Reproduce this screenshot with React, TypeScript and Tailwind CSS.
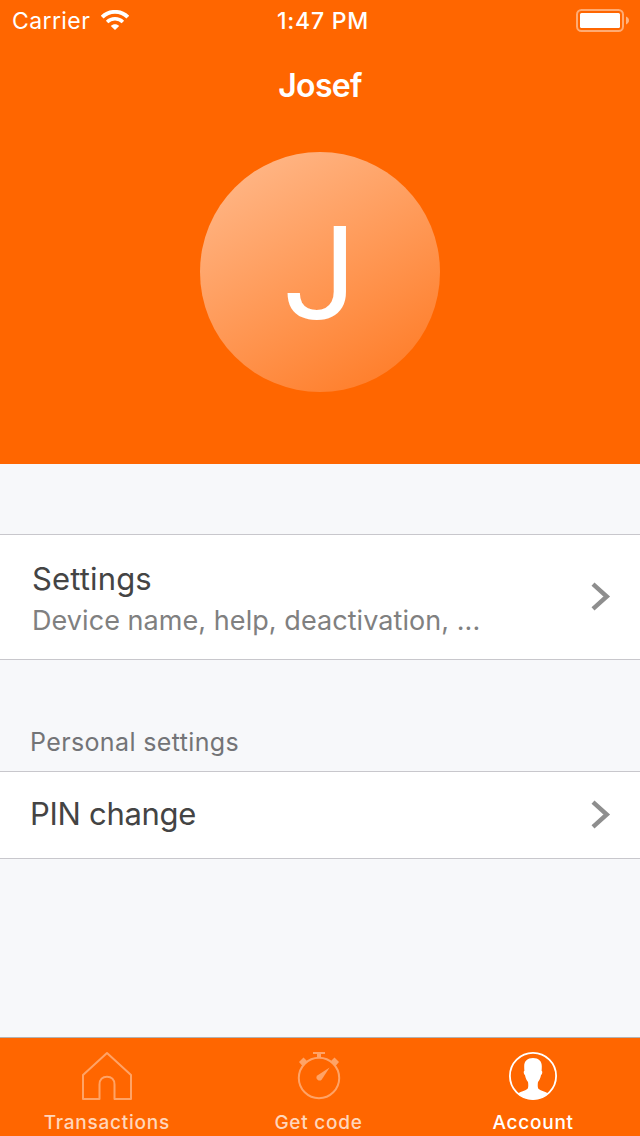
import type { ReactNode } from 'react'

interface RowProps {
  title: string
  subtitle?: string
}

interface TabProps {
  label: string
  active?: boolean
  children: ReactNode
}

function WifiIcon() {
  return (
    <svg className="mb-[2px]" width="28" height="20" viewBox="0 0 28 20" fill="none">
      <path d="M1.2 7.1C8.2 .1 19.8 .1 26.8 7.1" stroke="#fff" strokeWidth="3.9" />
      <path d="M6.1 11.9C10.4 7.8 17.6 7.8 21.9 11.9" stroke="#fff" strokeWidth="3.5" />
      <path d="M14 20L9.8 15.9C12.1 13.7 15.9 13.7 18.2 15.9Z" fill="#fff" />
    </svg>
  )
}

function BatteryIcon() {
  return (
    <svg width="54" height="24" viewBox="0 0 54 24" fill="none">
      <rect x="1" y="1" width="46" height="21" rx="4.5" stroke="#fff" strokeOpacity=".45" strokeWidth="2" />
      <rect x="4" y="4" width="40" height="15" rx="1.5" fill="#fff" />
      <path d="M50 7.5C51.8 8.3 53 9.7 53 11.5S51.8 14.7 50 15.5Z" fill="#fff" fillOpacity=".5" />
    </svg>
  )
}

function Chevron() {
  return (
    <svg className="shrink-0" width="20" height="30" viewBox="0 0 20 30" fill="none">
      <path d="M2 2.1L15.8 14.5L2 26.9" stroke="#8e8e8e" strokeWidth="4.4" />
    </svg>
  )
}

function HomeIcon() {
  return (
    <svg className="shrink-0" width="52" height="50" viewBox="0 0 52 50" fill="none">
      <path
        d="M2 24L26 2L50 24V48H33.5V33.5C33.5 28.5 30.5 25.7 26 25.7S18.5 28.5 18.5 33.5V48H2Z"
        stroke="#ffa366"
        strokeWidth="2"
        strokeLinejoin="round"
      />
    </svg>
  )
}

function StopwatchIcon() {
  return (
    <svg className="shrink-0" width="46" height="50" viewBox="0 0 46 50" fill="none">
      <circle cx="23" cy="27" r="20.2" stroke="#ffa366" strokeWidth="2" />
      <path d="M17 1H29V3H25V7H21V3H17Z" fill="#ffa366" />
      <path d="M3 11L7.5 6.5L11 10L9.8 12L6.5 15Z" fill="#ffa366" />
      <path d="M43 11L38.5 6.5L35 10L36.2 12L39.5 15Z" fill="#ffa366" />
      <path d="M33.6 16.6L25.8 28.4A3 3 0 1 1 21.3 24.4Z" fill="#ffa366" />
    </svg>
  )
}

function AccountIcon() {
  return (
    <svg className="shrink-0" width="48" height="50" viewBox="0 0 48 50" fill="none">
      <circle cx="24" cy="25" r="23.1" stroke="#fff" strokeWidth="1.8" />
      <path
        d="M24 7C29.5 7 32.8 10 32.8 15.2C32.8 17 32.7 18.6 32.6 19.8C33.8 20.4 33.3 23.4 32 24.2C31.5 27 30.2 29.5 29 31C28.6 33.5 28.5 36.8 29.7 38.1C31.8 40 36.7 40.7 39.3 42.8A23.4 23.4 0 0 1 8.7 42.8C11.3 40.7 16.2 40 18.3 38.1C19.5 36.8 19.4 33.5 19 31C17.8 29.5 16.5 27 16 24.2C14.7 23.4 14.2 20.4 15.4 19.8C15.3 18.6 15.2 17 15.2 15.2C15.2 10 18.5 7 24 7Z"
        fill="#fff"
      />
    </svg>
  )
}

function SettingsRow({ title, subtitle }: RowProps) {
  return (
    <div
      className={
        subtitle
          ? 'flex h-[126px] items-center justify-between border-y border-[#c8c7cc] bg-white pr-[29px] pb-px pl-8'
          : 'flex h-22 items-center justify-between border-y border-[#c8c7cc] bg-white pr-[29px] pl-[30px]'
      }
    >
      <div className={subtitle ? 'pt-[7px]' : 'pb-[2px]'}>
        <p
          className={
            subtitle
              ? 'text-[31px] leading-10 tracking-[0.15px] text-[#444]'
              : 'text-[31px] leading-10 tracking-[-0.3px] text-[#444]'
          }
        >
          {title}
        </p>
        {subtitle && (
          <p className="mt-[2px] text-[27px] leading-10 tracking-[0.06px] text-[#808080]">{subtitle}</p>
        )}
      </div>
      <Chevron />
    </div>
  )
}

function Tab({ label, active, children }: TabProps) {
  return (
    <div className="flex flex-1 flex-col items-center pt-[13px]">
      {children}
      <span
        className={
          active
            ? 'mt-2 text-[19px] leading-7 font-medium tracking-[0.75px] text-white'
            : 'mt-2 text-[19px] leading-7 font-medium tracking-[0.75px] text-[#ffd6bb]'
        }
      >
        {label}
      </span>
    </div>
  )
}

export default function App() {
  return (
    <div className="flex h-[1136px] w-[640px] flex-col overflow-hidden bg-[#f7f8fa] font-['Inter',sans-serif]">
      <header className="flex h-[464px] flex-col bg-[#ff6600] text-white">
        <div className="grid h-10 grid-cols-3 items-center pt-[2px] pr-[10px] pl-3 text-[23px] leading-[38px]">
          <div className="flex items-center gap-[11px]">
            <span className="tracking-[0.4px]">Carrier</span>
            <WifiIcon />
          </div>
          <span className="pl-[4px] text-center font-medium tracking-[0.8px]">1:47 PM</span>
          <div className="flex justify-end">
            <BatteryIcon />
          </div>
        </div>
        <h1 className="h-22 pt-[2px] text-center text-[32px] leading-[88px] font-semibold tracking-[-0.7px]">
          Josef
        </h1>
        <div className="mx-auto mt-6 flex size-60 items-center justify-center rounded-full bg-linear-[150deg,#ffbc90,#ff771f]">
          <span className="pt-[6px] font-['Roboto',sans-serif] text-[130px] leading-none">J</span>
        </div>
      </header>

      <main className="flex-1 pt-[70px]">
        <SettingsRow title="Settings" subtitle="Device name, help, deactivation, ..." />
        <h2 className="h-[111px] pt-[66px] pl-[30px] text-[25px] leading-8 tracking-[0.37px] text-[#737477]">
          Personal settings
        </h2>
        <SettingsRow title="PIN change" />
      </main>

      <nav className="flex h-[99px] border-t border-[#b2b2b2] bg-[#ff6600]">
        <Tab label="Transactions">
          <HomeIcon />
        </Tab>
        <div className="-ml-[2px] flex flex-1 pr-[1px]">
          <Tab label="Get code">
            <StopwatchIcon />
          </Tab>
        </div>
        <Tab label="Account" active>
          <AccountIcon />
        </Tab>
      </nav>
    </div>
  )
}
